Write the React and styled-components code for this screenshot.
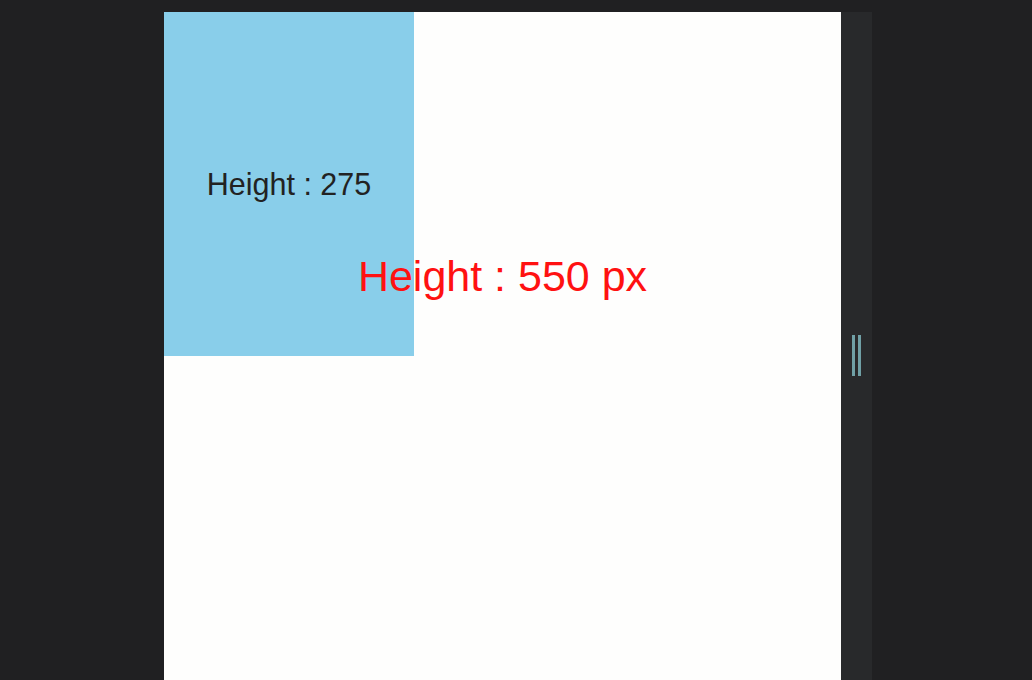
import React from 'react';
import styled, { createGlobalStyle } from 'styled-components';

const GlobalStyle = createGlobalStyle`
  html, body {
    margin: 0;
    padding: 0;
    background: #202022;
    font-family: "Liberation Sans", Arial, sans-serif;
  }
`;

const Stage = styled.div`
  display: flex;
  height: 100vh;
  box-sizing: border-box;
  padding: 12px 0 0 164px;
  overflow: hidden;
`;

const Panel = styled.div`
  position: relative;
  width: 677px;
  background: #fefefd;
`;

const Box = styled.div`
  width: 250px;
  height: 344px;
  background: #89ceea;
  display: flex;
  align-items: center;
  justify-content: center;
  color: #222222;
  font-size: 30.5px;
`;

const Overlay = styled.div`
  position: absolute;
  top: 0;
  left: 0;
  right: 0;
  height: 529px;
  display: flex;
  align-items: center;
  justify-content: center;
  color: #ff1111;
  font-size: 43px;
  line-height: 1;
  pointer-events: none;
`;

const Gutter = styled.div`
  width: 31px;
  background: #28292b;
  display: flex;
  align-items: flex-start;
  padding: 323px 0 0 11px;
  box-sizing: border-box;
  gap: 3px;
`;

const Grip = styled.div`
  width: 3px;
  height: 41px;
  background: #70a0a6;
`;

const App = () => (
  <>
    <GlobalStyle />
    <Stage>
      <Panel>
        <Box>Height : 275</Box>
        <Overlay>Height : 550 px</Overlay>
      </Panel>
      <Gutter>
        <Grip />
        <Grip />
      </Gutter>
    </Stage>
  </>
);

export default App;
